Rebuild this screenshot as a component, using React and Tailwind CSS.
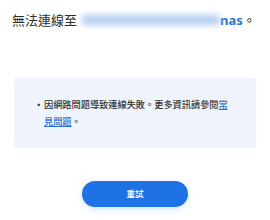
import React from "react";

// Connection error panel: title with blurred host, hint box, retry button.
const FONT = { fontFamily: '"Noto Sans", "Noto Sans CJK TC", sans-serif' };

export default function App() {
  return (
    <div className="w-[270px] h-[220px] bg-white overflow-hidden" style={FONT}>
      {/* Title */}
      <div className="mt-[10px] px-3 flex items-center text-[13px] leading-[20px] text-[#2e2e2e] whitespace-nowrap">
        <span>無法連線至</span>
        <span className="relative ml-[3px] w-[140px] h-[20px]">
          <span className="absolute left-[2px] right-0 top-[5px] h-[10px] bg-[#b3cff3] blur-[3px]" />
        </span>
        <span className="font-bold text-[#2f73d2]">nas</span>
        <span>。</span>
      </div>

      {/* Hint box */}
      <div className="mt-[48px] mx-[14px] pl-[23px] pr-[22px] py-[18px] bg-[#eef3fc] rounded-[2px] shadow-[0_0_2px_rgba(0,0,0,0.04)]">
        <div className="flex text-[9.2px] leading-[17px] font-medium text-[#333333]">
          <span className="w-[7px] shrink-0">•</span>
          <p className="pr-[2px]">
            因網路問題導致連線失敗。更多資訊請參閱
            <a className="text-[#2b72d6] underline">常見問題</a>。
          </p>
        </div>
      </div>

      {/* Retry button */}
      <button className="mt-[33px] mx-auto flex items-center justify-center w-[106px] h-[26px] rounded-full bg-[#1f72e4] text-white text-[8.5px] font-medium shadow-[0_2px_6px_rgba(31,114,228,0.2)]">
        重試
      </button>
    </div>
  );
}
